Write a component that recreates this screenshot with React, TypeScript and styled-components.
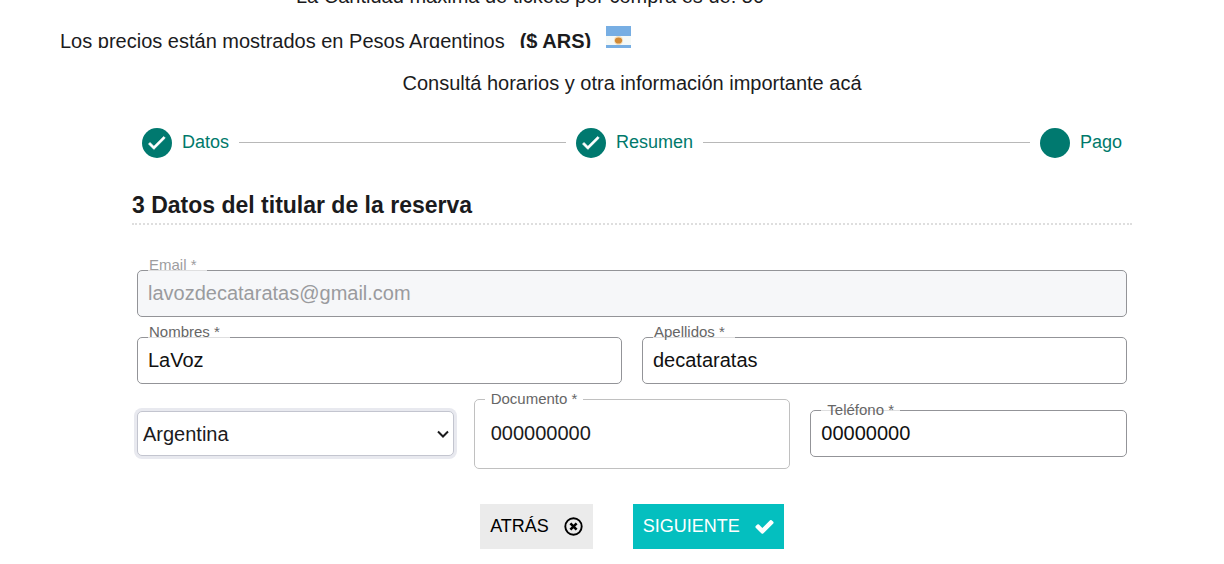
import React, { useState } from "react";
import styled, { createGlobalStyle } from "styled-components";

const GlobalStyle = createGlobalStyle`
  *, *::before, *::after { box-sizing: border-box; }
  body {
    margin: 0;
    background: #fff;
    color: #1b1b1d;
    font-family: "Liberation Sans", Arial, sans-serif;
    font-size: 20px;
  }
  button, input, select { font: inherit; color: inherit; }
`;

const Page = styled.main`
  display: flex;
  flex-direction: column;
  padding: 0 20px 15px 60px;
`;

const LimitNotice = styled.p`
  display: flex;
  justify-content: center;
  align-items: flex-end;
  width: 100%;
  max-width: 940px;
  height: 8px;
  margin: 0;
  overflow: hidden;
  line-height: 24px;
`;

const CurrencyNotice = styled.p`
  display: flex;
  align-items: flex-end;
  gap: 15px;
  margin: 18px 0 0;
`;

const ClippedText = styled.span`
  height: 15px;
  overflow: hidden;
  line-height: 16px;
  white-space: nowrap;
`;

const Currency = styled(ClippedText)`
  font-weight: 700;
`;

const Flag = styled.svg`
  display: block;
  width: 25px;
  height: 22px;
`;

const InfoLink = styled.a`
  align-self: center;
  margin-top: 23px;
  line-height: 24px;
  color: inherit;
  text-decoration: none;
`;

const Booking = styled.section`
  width: 100%;
  max-width: 1000px;
  margin: 33px auto 0;
`;

const Stepper = styled.ol`
  display: flex;
  align-items: center;
  gap: 10px;
  margin: 0;
  padding: 0 10px;
  list-style: none;
`;

const Step = styled.li<{ $grow?: boolean }>`
  display: flex;
  align-items: center;
  gap: 10px;
  flex: ${(p) => (p.$grow ? "1 1 auto" : "0 0 auto")};
  color: #00796b;
  font-size: 18px;
  line-height: 28px;
`;

const StepDot = styled.span`
  display: grid;
  place-items: center;
  width: 30px;
  height: 30px;
  border-radius: 50%;
  background: #00796f;
`;

const StepLabel = styled.span`
  padding-bottom: 2px;
`;

const Connector = styled.span`
  flex: 1;
  height: 1px;
  margin-bottom: 2px;
  background: #b8b8b8;
`;

const Title = styled.h2`
  margin: 33px 0 0;
  padding-bottom: 4px;
  border-bottom: 2px dotted #dedede;
  font-size: 23px;
  line-height: 28px;
`;

const Form = styled.form`
  padding: 0 5px;
`;

const Row = styled.div<{ $columns: number; $top: number }>`
  display: grid;
  grid-template-columns: repeat(${(p) => p.$columns}, minmax(0, 1fr));
  align-items: center;
  gap: 20px;
  margin-top: ${(p) => p.$top}px;
`;

const Field = styled.div`
  position: relative;
`;

const Input = styled.input`
  display: block;
  width: 100%;
  height: 47px;
  padding: 0 10px;
  border: 1px solid #939498;
  border-radius: 5px;
  background: #fff;
  color: #111;
  outline: 0;

  &:disabled {
    background: #f6f7f9;
    color: #9a9b9e;
  }
`;

const Label = styled.label<{ $muted?: boolean; $middle?: boolean }>`
  position: absolute;
  left: 11px;
  top: ${(p) => (p.$middle ? "-9px" : "-14px")};
  padding: ${(p) => (p.$middle ? "0 6px" : "0 10px 0 1px")};
  background: linear-gradient(rgba(255, 255, 255, 0.7), rgba(255, 255, 255, 0.7)) no-repeat 0
    ${(p) => (p.$middle ? "9px" : "14px")} / 100% 1px;
  font-size: 15px;
  line-height: 18px;
  color: ${(p) => (p.$muted ? "#9d9d9f" : "#666")};
`;

/* The legend rises above the row so that the border lines up with it. */
const Outlined = styled.fieldset`
  min-width: 0;
  height: 79px;
  margin: -9px 0 -1px;
  padding: 0 10px;
  border: 1px solid #c0c0c0;
  border-radius: 5px;

  legend {
    padding: 0 6px;
    font-size: 15px;
    line-height: 18px;
    color: #666;
  }

  input {
    display: block;
    width: 100%;
    height: 24px;
    margin-top: 13px;
    padding: 0 6px;
    border: 0;
    background: none;
    outline: 0;
  }
`;

const SelectBox = styled.div`
  position: relative;

  select {
    display: block;
    width: 100%;
    height: 45px;
    padding: 0 30px 0 5px;
    appearance: none;
    border: 1px solid #c3c5cf;
    border-radius: 5px;
    background: #fff;
    box-shadow: 0 0 0 3px #e8e9ef;
    outline: 0;
  }

  svg {
    position: absolute;
    right: 4px;
    top: 19px;
    pointer-events: none;
  }
`;

const Actions = styled.div`
  display: flex;
  justify-content: center;
  gap: 40px;
  margin-top: 36px;
`;

const Button = styled.button<{ $primary?: boolean }>`
  display: flex;
  align-items: center;
  gap: 14px;
  height: 45px;
  padding: 0 9px 0 10px;
  border: 0;
  background: ${(p) => (p.$primary ? "#04bfbf" : "#ebebeb")};
  color: ${(p) => (p.$primary ? "#fff" : "#000")};
  font-size: 18px;
  cursor: pointer;

  svg {
    width: 21px;
    height: 21px;
  }
`;

const StepCheck = () => (
  <svg width="22" height="22" viewBox="0 0 24 24" fill="#fff" stroke="#fff" strokeWidth=".7" aria-hidden="true">
    <path d="M9 16.2 4.8 12l-1.7 1.7L9 19.6 21.4 7.2l-1.7-1.7z" transform="translate(-.4 -.6)" />
  </svg>
);

function TextField(props: {
  id: string;
  label: string;
  value: string;
  type?: string;
  disabled?: boolean;
  middle?: boolean;
}) {
  const { id, label, value, type = "text", disabled, middle } = props;
  return (
    <Field>
      <Input id={id} type={type} defaultValue={value} disabled={disabled} />
      <Label htmlFor={id} $muted={disabled} $middle={middle}>
        {label}
      </Label>
    </Field>
  );
}

export default function App() {
  const [country, setCountry] = useState("Argentina");

  return (
    <>
      <GlobalStyle />
      <Page>
        <LimitNotice>La Cantidad máxima de tickets por compra es de: 50</LimitNotice>
        <CurrencyNotice>
          <ClippedText>Los precios están mostrados en Pesos Argentinos</ClippedText>
          <Currency>($ ARS)</Currency>
          <Flag viewBox="0 0 25 22" role="img" aria-label="Argentina">
            <rect width="25" height="22" fill="#f5f9f7" />
            <rect width="25" height="10" fill="#77aee3" />
            <rect y="19" width="25" height="3" fill="#77aee3" />
            <circle cx="12.5" cy="14.5" r="4.5" fill="#f3dfbd" />
            <ellipse cx="12.5" cy="14.5" rx="3.6" ry="3.1" fill="#d28a35" />
          </Flag>
        </CurrencyNotice>
        <InfoLink href="#horarios">Consultá horarios y otra información importante acá</InfoLink>

        <Booking>
          <Stepper>
            <Step>
              <StepDot><StepCheck /></StepDot>
              <StepLabel>Datos</StepLabel>
            </Step>
            <Step $grow>
              <Connector />
              <StepDot><StepCheck /></StepDot>
              <StepLabel>Resumen</StepLabel>
            </Step>
            <Step $grow>
              <Connector />
              <StepDot />
              <StepLabel>Pago</StepLabel>
            </Step>
          </Stepper>

          <Title>3 Datos del titular de la reserva</Title>

          <Form onSubmit={(e) => e.preventDefault()}>
            <Row $columns={1} $top={45}>
              <TextField id="email" label="Email *" type="email" value="lavozdecataratas@gmail.com" disabled />
            </Row>
            <Row $columns={2} $top={20}>
              <TextField id="nombres" label="Nombres *" value="LaVoz" />
              <TextField id="apellidos" label="Apellidos *" value="decataratas" />
            </Row>
            <Row $columns={3} $top={15}>
              <SelectBox>
                <select aria-label="País" value={country} onChange={(e) => setCountry(e.target.value)}>
                  <option>Argentina</option>
                  <option>Brasil</option>
                  <option>Paraguay</option>
                </select>
                <svg width="14" height="9" viewBox="0 0 14 9" fill="none" stroke="#1b1b1d" strokeWidth="2" aria-hidden="true">
                  <path d="M2 1.5l5 5 5-5" />
                </svg>
              </SelectBox>
              <Outlined>
                <legend><label htmlFor="documento">Documento *</label></legend>
                <input id="documento" type="text" defaultValue="000000000" />
              </Outlined>
              <TextField id="telefono" label="Teléfono *" type="tel" value="00000000" middle />
            </Row>
            <Actions>
              <Button type="button">
                ATRÁS
                <svg viewBox="0 0 21 21" fill="none" stroke="currentColor" aria-hidden="true">
                  <circle cx="10.5" cy="10.5" r="8.2" strokeWidth="1.9" />
                  <path d="M7.4 7.4l6.2 6.2M13.6 7.4l-6.2 6.2" strokeWidth="2.6" />
                </svg>
              </Button>
              <Button type="submit" $primary>
                SIGUIENTE
                <svg viewBox="0 0 1792 1792" fill="currentColor" aria-hidden="true">
                  <path d="M1671 566q0 40-28 68l-724 724-136 136q-28 28-68 28t-68-28l-136-136-362-362q-28-28-28-68t28-68l136-136q28-28 68-28t68 28l294 295 656-657q28-28 68-28t68 28l136 136q28 28 28 68z" />
                </svg>
              </Button>
            </Actions>
          </Form>
        </Booking>
      </Page>
    </>
  );
}
